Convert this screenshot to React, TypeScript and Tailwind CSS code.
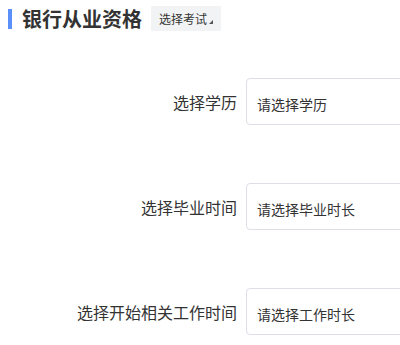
const ROWS = [
  { label: '选择学历', placeholder: '请选择学历' },
  { label: '选择毕业时间', placeholder: '请选择毕业时长' },
  { label: '选择开始相关工作时间', placeholder: '请选择工作时长' },
]

export default function App() {
  return (
    <div
      className="w-[400px] h-[345px] overflow-hidden bg-white text-[#333]"
      style={{ fontFamily: '"Noto Sans CJK SC", "Noto Sans", sans-serif' }}
    >
      <div className="flex items-center pt-[6px] h-[31px]">
        <span className="ml-[8px] w-[4px] h-[20px] bg-[#5b8ff9]" />
        <h1 className="ml-[10px] text-[20px] leading-[25px] font-bold text-[#333]">银行从业资格</h1>
        <div className="relative ml-[9px] h-[25px] w-[70px] bg-[#f2f3f5] flex items-center pl-[8px] text-[12px] text-[#333]">
          选择考试
          <span className="absolute right-[8px] bottom-[7px] w-0 h-0 border-l-[4px] border-l-transparent border-b-[4px] border-b-[#555]" />
        </div>
      </div>

      <div className="mt-[47px] flex flex-col gap-[58px]">
        {ROWS.map((r) => (
          <div key={r.label} className="flex items-center">
            <label className="w-[237px] shrink-0 text-right text-[16px] text-[#333]">{r.label}</label>
            <div className="ml-[9px] w-[300px] h-[47px] shrink-0 rounded-[4px] border border-[#dcdfe6] flex items-center pl-[10px] pt-[5px] text-[14px] text-[#333]">
              {r.placeholder}
            </div>
          </div>
        ))}
      </div>
    </div>
  )
}
